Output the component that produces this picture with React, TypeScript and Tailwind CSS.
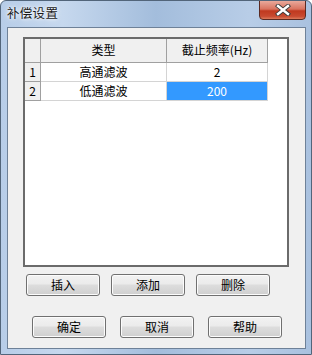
import React from "react";

const font = { fontFamily: '"Noto Sans CJK SC", "Noto Sans", sans-serif' };

function Btn({ label }: { label: string }) {
  return (
    <div className="w-[74px] h-[22px] rounded-[3px] border border-[#707070] bg-[linear-gradient(#f2f2f2_0%,#ebebeb_45%,#dddddd_50%,#cfcfcf_100%)] shadow-[inset_0_0_0_1px_#fcfcfc] flex items-center justify-center text-[12px] text-black leading-none">
      {label}
    </div>
  );
}

export default function App() {
  const rows = [
    { n: "1", type: "高通滤波", freq: "2", sel: false },
    { n: "2", type: "低通滤波", freq: "200", sel: true },
  ];
  return (
    <div
      className="relative w-[312px] h-[355px] overflow-hidden rounded-t-[6px] bg-[linear-gradient(90deg,#b7cde8_0%,#c6d8ee_20%,#a3bddc_50%,#b8cde7_80%,#a9c1df_100%)] border border-[#52657a]"
      style={font}
    >
      {/* title bar */}
      <div className="h-[26px] flex items-start pl-[6px] pt-[4px]">
        <span className="text-[12.5px] text-[#1a1a1a] leading-[16px] tracking-[0.3px] [text-shadow:0_0_6px_#ffffff,0_0_3px_#ffffff]">
          补偿设置
        </span>
      </div>
      <div className="absolute left-[258px] top-[-1px] w-[47px] h-[20px] rounded-b-[4px] border border-[#5a2a22] bg-[linear-gradient(#e9a99b_0%,#d9735f_45%,#c0391f_55%,#c84a30_85%,#dd7a5a_100%)] flex items-center justify-center">
        <svg width="16" height="12" viewBox="0 0 16 12">
          <path d="M3 2 L13 10 M13 2 L3 10" stroke="#3b3b3b" strokeWidth="4.2" strokeLinecap="square" />
          <path d="M3 2 L13 10 M13 2 L3 10" stroke="#ffffff" strokeWidth="2.4" strokeLinecap="square" />
        </svg>
      </div>

      {/* client area */}
      <div className="ml-[6px] mr-[5px] h-[322px] border border-[#6e8198] bg-[#f0f0f0] flex flex-col">
        {/* grid */}
        <div className="ml-[15px] mt-[9px] w-[266px] h-[230px] border-2 border-[#6b6b6b] bg-white text-[12px] text-black">
          {/* header */}
          <div className="flex h-[24px]">
            <div className="w-[16px] bg-[#f0f0f0] border-r border-b border-[#a0a0a0]" />
            <div className="w-[126px] bg-[#f0f0f0] border-r border-b border-[#a0a0a0] flex items-center justify-center pb-[1px]">
              类型
            </div>
            <div className="w-[101px] bg-[#f0f0f0] border-r border-b border-[#a0a0a0] flex items-center justify-center pb-[1px]">
              截止频率(Hz)
            </div>
            <div className="flex-1" />
          </div>
          {rows.map((r) => (
            <div key={r.n} className="flex h-[19px]">
              <div className="w-[16px] bg-[#f0f0f0] border-r border-b border-[#a0a0a0] flex items-center justify-center">
                {r.n}
              </div>
              <div className="w-[126px] border-r border-b border-[#d4d4d4] flex items-center justify-center">
                {r.type}
              </div>
              <div className="w-[101px] border-r border-b border-[#d4d4d4] flex items-center justify-center p-0">
                <div
                  className={
                    r.sel
                      ? "w-full h-full bg-[#3399ff] text-white flex items-center justify-center"
                      : "w-full h-full flex items-center justify-center"
                  }
                >
                  {r.freq}
                </div>
              </div>
              <div className="flex-1" />
            </div>
          ))}
        </div>

        {/* buttons row 1 */}
        <div className="flex gap-[11px] ml-[18px] mt-[7px]">
          <Btn label="插入" />
          <Btn label="添加" />
          <Btn label="删除" />
        </div>
        {/* buttons row 2 */}
        <div className="flex gap-[14px] ml-[24px] mt-[20px]">
          <Btn label="确定" />
          <Btn label="取消" />
          <Btn label="帮助" />
        </div>
      </div>
    </div>
  );
}
